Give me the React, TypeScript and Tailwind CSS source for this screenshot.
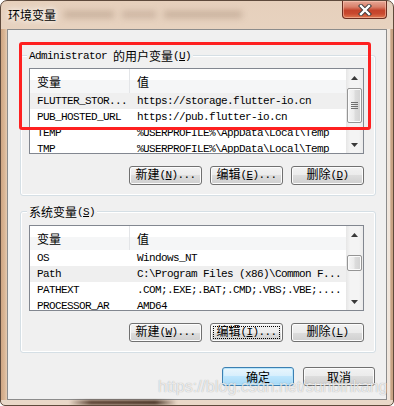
import React from "react";

const mono = "font-['Liberation_Mono','Noto_Sans_CJK_SC',monospace]";

function A({ children }: { children: React.ReactNode }) {
  return <span className="text-[11px] tracking-[-0.6px]">{children}</span>;
}

function U({ c }: { c: string }) {
  return <span className="underline underline-offset-[1px] decoration-1">{c}</span>;
}

function Tri({ down }: { down?: boolean }) {
  return (
    <svg width="7" height="4" viewBox="0 0 7 4">
      <path d={down ? "M0 0H7L3.5 4Z" : "M3.5 0L7 4H0Z"} fill="#3a3a3a" />
    </svg>
  );
}

function ScrollBar({ thumb, grip }: { thumb: string; grip?: boolean }) {
  return (
    <div className="w-[17px] shrink-0 flex flex-col bg-[linear-gradient(90deg,#e6e6e6_0%,#f4f4f4_25%,#f4f4f4_75%,#ebebeb_100%)]">
      <div className="h-[17px] shrink-0 flex items-center justify-center">
        <Tri />
      </div>
      <div className="flex-1 px-[1px]">
        <div
          className={`${thumb} rounded-[2px] border border-[#959595] bg-[linear-gradient(90deg,#f6f6f6_0%,#ebebeb_45%,#dcdcdc_55%,#d2d2d2_100%)] shadow-[inset_0_0_0_1px_#fbfbfb] flex flex-col items-center justify-center gap-[1px]`}
        >
          {grip && (
            <>
              <div className="w-[7px] h-[1px] bg-[#707070]" />
              <div className="w-[7px] h-[1px] bg-[#707070]" />
              <div className="w-[7px] h-[1px] bg-[#707070]" />
              <div className="w-[7px] h-[1px] bg-[#707070]" />
            </>
          )}
        </div>
      </div>
      <div className="h-[17px] shrink-0 flex items-center justify-center">
        <Tri down />
      </div>
    </div>
  );
}

type Row = { k: string; v: string; hl?: boolean };

function ListBox({ rows, thumb, grip }: { rows: Row[]; thumb: string; grip?: boolean }) {
  return (
    <div className="h-[86px] border border-[#828790] bg-white flex overflow-hidden">
      <div className="flex-1 flex flex-col overflow-hidden">
        <div className="h-[24px] shrink-0 flex bg-[linear-gradient(180deg,#ffffff_0%,#ffffff_45%,#f5f6f7_45%,#f5f6f7_100%)] text-[12px] font-['Noto_Sans_CJK_SC',sans-serif] text-black">
          <div className="w-[100px] shrink-0 border-r border-[#e3e5e8] pl-[7px] flex items-center pt-[2px]">变量</div>
          <div className="flex-1 pl-[7px] flex items-center pt-[2px]">值</div>
        </div>
        {rows.map((r, i) => (
          <div
            key={i}
            className={`h-[16px] shrink-0 flex items-center ${mono} text-[11px] tracking-[-0.6px] leading-[16px] text-black whitespace-nowrap ${r.hl ? "bg-[#efefef]" : ""}`}
          >
            <div className="w-[100px] shrink-0 pl-[7px] overflow-hidden">{r.k}</div>
            <div className="flex-1 pl-[7px] overflow-hidden">{r.v}</div>
          </div>
        ))}
      </div>
      <ScrollBar thumb={thumb} grip={grip} />
    </div>
  );
}

function Btn({
  children,
  primary,
  focus,
  w = "w-[73px]",
}: {
  children: React.ReactNode;
  primary?: boolean;
  focus?: boolean;
  w?: string;
}) {
  return (
    <div
      className={`${w} h-[19px] rounded-[3px] border flex items-center justify-center text-[12px] leading-none text-black ${mono} ${
        primary
          ? "border-[#3c7fb1] bg-[linear-gradient(180deg,#e9f6fd_0%,#d6eefc_50%,#bee6fd_50%,#a7d9f5_100%)] shadow-[inset_0_0_0_1px_#b6e4fb]"
          : "border-[#707070] bg-[linear-gradient(180deg,#f2f2f2_0%,#ebebeb_50%,#dddddd_50%,#cfcfcf_100%)] shadow-[inset_0_0_0_1px_#fcfcfc]"
      } ${focus ? "outline-1 outline-dotted outline-black outline-offset-[-4px]" : ""}`}
    >
      {children}
    </div>
  );
}

function Group({
  label,
  children,
  pt,
}: {
  label: React.ReactNode;
  children: React.ReactNode;
  pt: string;
}) {
  return (
    <div className={`relative border border-[#d5dfe5] rounded-[3px] shadow-[inset_0_0_0_1px_#ffffff] pl-[8px] pr-[11px] ${pt} pb-[10px]`}>
      <div className={`absolute left-[6px] top-[-8px] px-[2px] bg-[#f0f0f0] h-[16px] flex items-center text-black whitespace-nowrap ${mono}`}>
        {label}
      </div>
      {children}
    </div>
  );
}

const userRows: Row[] = [
  { k: "FLUTTER_STOR...", v: "https://storage.flutter-io.cn", hl: true },
  { k: "PUB_HOSTED_URL", v: "https://pub.flutter-io.cn" },
  { k: "TEMP", v: "%USERPROFILE%\\AppData\\Local\\Temp" },
  { k: "TMP", v: "%USERPROFILE%\\AppData\\Local\\Temp" },
];

const sysRows: Row[] = [
  { k: "OS", v: "Windows_NT" },
  { k: "Path", v: "C:\\Program Files (x86)\\Common F...", hl: true },
  { k: "PATHEXT", v: ".COM;.EXE;.BAT;.CMD;.VBS;.VBE;...." },
  { k: "PROCESSOR_AR", v: "AMD64" },
];

export default function App() {
  return (
    <div className="w-[394px] h-[406px] relative overflow-hidden bg-white">
      <div className="w-full h-full flex flex-col border border-[#5e4a3c] rounded-t-[7px] rounded-b-[5px] overflow-hidden bg-[linear-gradient(180deg,#e6d0bc_0%,#ecdccd_35%,#e9d8c8_100%)]">
        {/* Title bar */}
        <div className="h-[28px] shrink-0 flex items-start">
          <div className="pl-[7px] pt-[7px] text-[12px] leading-[14px] text-black font-['Noto_Sans_CJK_SC',sans-serif] [text-shadow:0_0_5px_#ffffff,0_0_8px_#ffffff]">
            环境变量
          </div>
          <div className="flex items-center mt-[10px] ml-[8px] gap-[8px] blur-[3px]">
            <div className="w-[50px] h-[7px] bg-[#9a7f6c]/40" />
            <div className="w-[34px] h-[7px] bg-[#9a7f6c]/35" />
            <div className="w-[78px] h-[7px] bg-[#9a7f6c]/40" />
          </div>
          <div className="ml-auto mr-[6px] w-[45px] h-[18px] rounded-b-[4px] border border-t-0 border-[#6a2e22] bg-[linear-gradient(180deg,#e7a897_0%,#d9806a_35%,#c4432b_55%,#c9492f_75%,#e07a52_100%)] shadow-[inset_0_0_0_1px_rgba(255,210,190,0.5)] flex items-center justify-center">
            <svg width="14" height="12" viewBox="0 0 14 12">
              <path d="M3 2L11 10M11 2L3 10" stroke="#3b3b3b" strokeWidth="4.2" strokeLinecap="square" />
              <path d="M3 2L11 10M11 2L3 10" stroke="#ffffff" strokeWidth="2.4" strokeLinecap="square" />
            </svg>
          </div>
        </div>

        {/* Middle */}
        <div className="flex-1 flex min-h-0">
          <div className="w-[6px] shrink-0 bg-[linear-gradient(90deg,#cfa684_0%,#dbb796_60%,#e4cbb4_100%)]" />
          <div className="flex-1 border border-[#8c8c8c] bg-[#f0f0f0] pl-[12px] pr-[10px] pt-[25px] flex flex-col">
            <Group
              pt="pt-[12px]"
              label={
                <>
                  <A>Administrator&nbsp;</A>
                  <span className="text-[12px] font-['Noto_Sans_CJK_SC',sans-serif]">的用户变量</span>
                  <A>
                    (<U c="U" />)
                  </A>
                </>
              }
            >
              <ListBox rows={userRows} thumb="mt-[2px] h-[35px]" grip />
              <div className="mt-[12px] flex justify-end gap-[8px]">
                <Btn>
                  新建<A>
                    (<U c="N" />)...
                  </A>
                </Btn>
                <Btn>
                  编辑<A>
                    (<U c="E" />)...
                  </A>
                </Btn>
                <Btn>
                  删除<A>
                    (<U c="D" />)
                  </A>
                </Btn>
              </div>
            </Group>

            <div className="h-[15px] shrink-0" />

            <Group
              pt="pt-[13px]"
              label={
                <>
                  <span className="text-[12px] font-['Noto_Sans_CJK_SC',sans-serif]">系统变量</span>
                  <A>
                    (<U c="S" />)
                  </A>
                </>
              }
            >
              <ListBox rows={sysRows} thumb="mt-[12px] h-[16px]" />
              <div className="mt-[12px] flex justify-end gap-[8px]">
                <Btn>
                  新建<A>
                    (<U c="W" />)...
                  </A>
                </Btn>
                <Btn focus>
                  编辑<A>
                    (<U c="I" />)...
                  </A>
                </Btn>
                <Btn>
                  删除<A>
                    (<U c="L" />)
                  </A>
                </Btn>
              </div>
            </Group>

            <div className="mt-[14px] mr-[1px] flex justify-end gap-[9px]">
              <Btn primary w="w-[72px]">
                <span className="font-['Noto_Sans_CJK_SC',sans-serif]">确定</span>
              </Btn>
              <Btn w="w-[72px]">
                <span className="font-['Noto_Sans_CJK_SC',sans-serif]">取消</span>
              </Btn>
            </div>
          </div>
          <div className="w-[6px] shrink-0 bg-[linear-gradient(90deg,#f0e7de_0%,#efe4d9_55%,#c9a283_60%,#c9a283_100%)]" />
        </div>

        {/* Bottom frame */}
        <div className="h-[5px] shrink-0 flex">
          <div className="ml-[68px] w-[108px] h-full bg-[linear-gradient(90deg,rgba(90,60,40,0)_0%,rgba(80,55,40,0.85)_20%,rgba(70,50,35,0.9)_80%,rgba(90,60,40,0)_100%)] blur-[1px]" />
        </div>
      </div>

      {/* Red highlight annotation */}
      <div className="absolute left-[19px] top-[42px] w-[352px] h-[88px] border-[3px] border-[#fe2020] rounded-[3px]" />

      {/* Watermark */}
      <div className="absolute left-[158px] top-[379px] text-[16px] leading-[16px] font-['Liberation_Sans',Arial,sans-serif] text-white/75 [text-shadow:0_0_1px_rgba(0,0,0,0.35)] whitespace-nowrap pointer-events-none">
        https://blog.csdn.net/sunbinkang
      </div>
    </div>
  );
}
